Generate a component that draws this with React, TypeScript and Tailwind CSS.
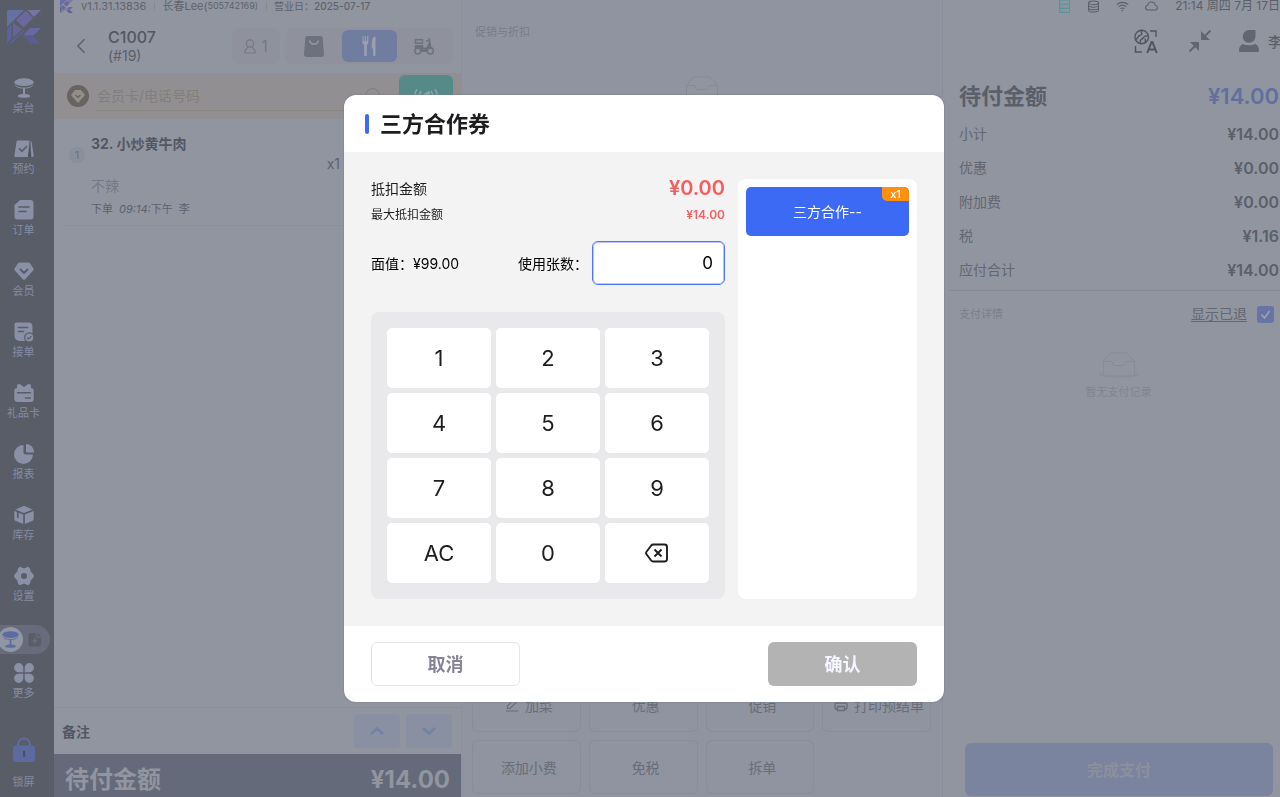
import React, { useState } from "react";

type IconProps = { className?: string };

const BrandMark = ({ className }: IconProps) => (
  <svg viewBox="0 0 34 34" className={className} aria-hidden="true">
    <path d="M0 1.500Q0 0 1.500 0H17L0 17z" fill="#6570a3" />
    <path d="M18.500.8l7.500 7.200-9.500 9.500L9 10z" fill="#6a689c" />
    <path d="M20.500 0H34l-7 7z" fill="#7476a0" />
    <path d="M0 19l4.500-4.500V28L0 33.500z" fill="#5a63a0" />
    <path d="M6 12.500l9 7-9 8z" fill="#646796" />
    <path d="M1.500 34L17 19.500v2L5 33z" fill="#5c6196" />
    <path d="M23 18h11l-7.500 7.500H16z" fill="#6769a3" />
    <path d="M16 26.500h10.500L33.500 34H24z" fill="#5b5c93" />
  </svg>
);

const TableIcon = ({ className }: IconProps) => (
  <svg viewBox="0 0 20 20" className={className} fill="currentColor" aria-hidden="true">
    <ellipse cx="10" cy="4.200" rx="9.700" ry="3.900" />
    <path d="M.6 6.200C3 9 6 9.600 10 9.600s7-.6 9.400-3.400C18.500 9.500 14.500 10.300 11 10.500V16c3 .1 5.200.8 5.200 1.900 0 1.200-2.800 1.900-6.200 1.900s-6.200-.7-6.200-1.900c0-1.100 2.200-1.800 5.200-1.900v-5.500C5.500 10.300 1.500 9.500.6 6.200z" />
  </svg>
);
const BookingIcon = ({ className }: IconProps) => (
  <svg viewBox="0 0 20 20" className={className} aria-hidden="true">
    <path d="M4 1.500h11.500L14 18H1.500C.6 18 .2 17.400.4 16.500L2.500 2.800C2.700 2 3.200 1.500 4 1.500z" fill="currentColor" />
    <path d="M5 9.300l3 3L13 7" fill="none" stroke="#595d68" strokeWidth="1.700" />
    <path d="M16.400 2c.8.1 1.200.6 1.300 1.300l2 13.200c.1.900-.4 1.500-1.300 1.500h-1z" fill="currentColor" />
    <path d="M15.600 7.500L17 18h-3z" fill="#4d515c" />
  </svg>
);
const OrderIcon = ({ className }: IconProps) => (
  <svg viewBox="0 0 20 20" className={className} aria-hidden="true">
    <path d="M6 0h10.500a3 3 0 0 1 3 3v13.500a3 3 0 0 1-3 3h-13a3 3 0 0 1-3-3V5z" fill="currentColor" />
    <path d="M5 7h10M5 11.500h7" stroke="#595d68" strokeWidth="1.600" strokeLinecap="round" />
  </svg>
);
const MemberIcon = ({ className }: IconProps) => (
  <svg viewBox="0 0 20 20" className={className} aria-hidden="true">
    <path d="M5.500 1.500h9c.6 0 1.100.3 1.500.8l3.400 5c.5.800.4 1.500-.2 2.200l-8 8.700c-.7.700-1.700.7-2.400 0l-8-8.700C.2 8.800.100 8.100.600 7.300l3.400-5c.400-.500.900-.800 1.500-.800z" fill="currentColor" />
    <path d="M6.500 8.500L10 12l3.500-3.500" fill="none" stroke="#595d68" strokeWidth="1.800" strokeLinecap="round" strokeLinejoin="round" />
  </svg>
);
const AcceptIcon = ({ className }: IconProps) => (
  <svg viewBox="0 0 20 20" className={className} aria-hidden="true">
    <path d="M2.500.5h12c2.500 0 4 1.500 4 4V19H5.500A5 5 0 0 1 .5 14V2.500a2 2 0 0 1 2-2z" fill="currentColor" />
    <path d="M4.500 5.500h9M4.500 9.500h5" stroke="#595d68" strokeWidth="1.600" strokeLinecap="round" />
    <circle cx="15.300" cy="15.500" r="4.600" fill="currentColor" stroke="#595d68" strokeWidth="1.300" />
    <path d="M13.200 15.500l1.500 1.500 2.700-2.800" fill="none" stroke="#595d68" strokeWidth="1.200" />
  </svg>
);
const GiftCardIcon = ({ className }: IconProps) => (
  <svg viewBox="0 0 20 20" className={className} aria-hidden="true">
    <path d="M3 6V3c0-2 2-2.600 3.500-1.600L10 4l3.500-2.600C15 .4 17 1 17 3v3z" fill="currentColor" />
    <rect x=".3" y="5" width="19.400" height="14" rx="3" fill="currentColor" />
    <path d="M3.500 9.800h13M11.500 15h4.800" stroke="#595d68" strokeWidth="1.500" strokeLinecap="round" />
  </svg>
);
const ReportIcon = ({ className }: IconProps) => (
  <svg viewBox="0 0 20 20" className={className} fill="currentColor" aria-hidden="true">
    <path d="M9.500 1A9.500 9.500 0 1 0 19 10.500h-7.500a2 2 0 0 1-2-2z" />
    <path d="M12.500 0A8 8 0 0 1 20 8.500h-6.500a1.500 1.500 0 0 1-1.500-1.500V.5z" />
  </svg>
);
const StockIcon = ({ className }: IconProps) => (
  <svg viewBox="0 0 20 20" className={className} fill="currentColor" aria-hidden="true">
    <path d="M10 .8l8.500 3.600L10 8 1.500 4.400z" />
    <path d="M.3 6l2.600 1v5.500l1.800.8V7.700l4.500 1.800V19l-7.300-3A2.500 2.500 0 0 1 .3 13.700zM19.700 6v7.700a2.500 2.500 0 0 1-1.600 2.300l-7.200 3V9.500z" />
  </svg>
);
const GearIcon = ({ className }: IconProps) => (
  <svg viewBox="0 0 20 20" className={className} fill="currentColor" aria-hidden="true">
    <path fillRule="evenodd" d="M5.500 1c.6-.3 1.200-.1 1.700.3 1.700 1.300 3.900 1.300 5.600 0 .5-.4 1.100-.6 1.700-.3 1.100.6 1.800 1.600 1.800 2.800.2 1.700 1 3 2.500 4 1.400 1 1.400 3.400 0 4.400-1.500 1-2.300 2.300-2.500 4 0 1.200-.7 2.200-1.800 2.800-.6.3-1.200.1-1.700-.3-1.700-1.300-3.900-1.300-5.600 0-.5.4-1.100.6-1.700.3-1.100-.6-1.800-1.600-1.800-2.800-.2-1.700-1-3-2.500-4-1.400-1-1.400-3.400 0-4.400 1.500-1 2.300-2.300 2.500-4C3.700 2.600 4.400 1.600 5.500 1zM10 7a3 3 0 1 0 0 6 3 3 0 0 0 0-6z" />
  </svg>
);
const MoreIcon = ({ className }: IconProps) => (
  <svg viewBox="0 0 20 20" className={className} fill="currentColor" aria-hidden="true">
    <path d="M9.300 9.300H4.700a4.600 4.600 0 1 1 4.600-4.600zM10.700 9.300h4.600a4.600 4.600 0 1 0-4.600-4.600zM9.300 10.700H4.700a4.600 4.600 0 1 0 4.600 4.600zM10.700 10.700h4.600a4.600 4.600 0 1 1-4.600 4.600z" />
  </svg>
);
const LockIcon = ({ className }: IconProps) => (
  <svg viewBox="0 0 22 25" className={className} aria-hidden="true">
    <path d="M5 10V7.500a6 6 0 0 1 12 0V10" fill="none" stroke="currentColor" strokeWidth="2.300" />
    <rect x="0" y="8.500" width="22" height="16.500" rx="3" fill="currentColor" />
    <rect x="10" y="13.500" width="2.200" height="6.500" rx="1.100" fill="#4b4f60" />
  </svg>
);

const navItems: { label: string; Icon: React.FC<IconProps> }[] = [
  { label: "桌台", Icon: TableIcon },
  { label: "预约", Icon: BookingIcon },
  { label: "订单", Icon: OrderIcon },
  { label: "会员", Icon: MemberIcon },
  { label: "接单", Icon: AcceptIcon },
  { label: "礼品卡", Icon: GiftCardIcon },
  { label: "报表", Icon: ReportIcon },
  { label: "库存", Icon: StockIcon },
  { label: "设置", Icon: GearIcon },
];

function Sidebar() {
  return (
    <nav className="flex w-[54px] shrink-0 flex-col bg-[#595d68] pr-[7px] text-[11px] text-[#858ca3]">
      <div className="flex justify-center pt-[10px] pb-[24px]">
        <BrandMark className="size-[34px]" />
      </div>
      {navItems.map(({ label, Icon }) => (
        <button key={label} type="button" className="flex h-[61px] shrink-0 flex-col items-center gap-[3px] pt-[10px]">
          <Icon className="size-[20px] text-[#8a90a6]" />
          <span className="leading-[14px] whitespace-nowrap">{label}</span>
        </button>
      ))}
      <div className="-mr-[3px] mt-2 flex h-[29px] shrink-0 items-center rounded-r-full bg-[#666c7b]">
        <button type="button" aria-label="桌台模式" className="-ml-[2px] flex size-[25px] items-center justify-center rounded-full bg-[#9196a5] text-[#5d6ba0]">
          <TableIcon className="size-[17px]" />
        </button>
        <button type="button" aria-label="快餐模式" className="ml-[5px] text-[#595d68]">
          <svg viewBox="0 0 14 15" className="h-[15px] w-[14px]" aria-hidden="true">
            <path d="M3 1h5v3.500A1.500 1.500 0 0 0 9.500 6H13v6a2.500 2.500 0 0 1-2.500 2.500H3A2.500 2.500 0 0 1 .5 12V3.500A2.500 2.500 0 0 1 3 1zM9.300.800L13 4.500H9.300z" fill="currentColor" />
            <path d="M6.800 6.500v5M4.300 9h5" stroke="#6f7585" strokeWidth="1.200" />
          </svg>
        </button>
      </div>
      <button type="button" className="mt-[9px] flex shrink-0 flex-col items-center gap-[3px]">
        <MoreIcon className="size-[20px] text-[#8a90a6]" />
        <span className="leading-[14px]">更多</span>
      </button>
      <button type="button" className="mt-auto flex shrink-0 flex-col items-center gap-[13px] pb-2">
        <LockIcon className="h-[25px] w-[22px] text-[#5d6a9f]" />
        <span className="leading-[14px]">锁屏</span>
      </button>
    </nav>
  );
}

function OrderPanel() {
  return (
    <section className="flex w-[407px] shrink-0 flex-col bg-[#9195a0]">
      <div className="flex h-[12px] shrink-0 items-center pl-[6px] text-[11px] leading-[12px] whitespace-nowrap text-[#5f636e]">
        <BrandMark className="size-[13px]" />
        <span className="ml-[8px]">v1.1.31.13836</span>
        <span className="mr-[7px] ml-[8px] h-[8px] w-px bg-[#858994]" />
        <span>长春Lee(</span>
        <span className="text-[9px]">505742169)</span>
        <span className="mr-[7px] ml-[8px] h-[8px] w-px bg-[#858994]" />
        <span className="text-[10px]">营业日：</span>
        <span className="text-[10px] font-medium">2025-07-17</span>
      </div>

      <header className="flex h-[61px] shrink-0 items-center pt-[7px] pr-[8px] pl-[21px] text-[#5b5f6a]">
        <button type="button" aria-label="返回">
          <svg viewBox="0 0 12 18" className="h-[16px] w-[12px]" fill="none" stroke="currentColor" strokeWidth="1.600" aria-hidden="true">
            <path d="M10 1.500L2.500 9l7.500 7.500" />
          </svg>
        </button>
        <div className="ml-[21px] flex-1">
          <h1 className="text-[16px] leading-[20px] font-medium text-[#535762]">C1007</h1>
          <p className="text-[14px] leading-[18px]">(#19)</p>
        </div>
        <button type="button" className="flex h-[36px] w-[48px] items-center justify-center gap-[5px] rounded-lg bg-[#8f929d] text-[16px] text-[#747884]">
          <svg viewBox="0 0 12 15" className="h-[15px] w-[12px]" fill="none" stroke="currentColor" strokeWidth="1.200" aria-hidden="true">
            <circle cx="6" cy="4.500" r="3.700" />
            <path d="M3.800 8L.8 12.200c-.5.900 0 1.800 1 1.800h8.400c1 0 1.500-.9 1-1.800L8.200 8" />
          </svg>
          1
        </button>
        <div className="ml-[5px] flex h-[36px] w-[168px] items-center justify-between rounded-lg bg-[#8f929d] px-[2px] text-[#6d717e]">
          <button type="button" aria-label="外带" className="flex h-[32px] w-[54px] items-center justify-center">
            <svg viewBox="0 0 20 21" className="h-[21px] w-[20px]" aria-hidden="true">
              <path d="M4 0h12c1.600 0 2.500.8 2.700 2.300L20 18c.1 2-.9 3-2.500 3h-15C.9 21-.1 20 0 18L1.300 2.300C1.500.8 2.400 0 4 0z" fill="currentColor" />
              <path d="M5.500 4.500c1 4.700 8 4.700 9 0" fill="none" stroke="#9195a0" strokeWidth="1.600" />
            </svg>
          </button>
          <button type="button" aria-label="堂食" className="flex h-[32px] w-[55px] items-center justify-center rounded-md bg-[#707d9f] text-[#9ba0b1]">
            <svg viewBox="0 0 15 20" className="h-[20px] w-[15px]" fill="currentColor" aria-hidden="true">
              <path d="M.5 0h1v5h1.200V0h1.200v5h1.200V0h1.200v6.500c0 1.200-.6 1.900-1.500 2.300V19a1.300 1.300 0 0 1-2.600 0V8.800C1.100 8.400.500 7.700.500 6.500zM13.500.3V19a1.200 1.200 0 0 1-2.400 0v-6.500H9.800V7c0-3.500 1.500-6 3.700-6.700z" />
            </svg>
          </button>
          <button type="button" aria-label="外卖" className="flex h-[32px] w-[54px] items-center justify-center">
            <svg viewBox="0 0 20 17" className="h-[17px] w-[20px]" fill="none" stroke="currentColor" strokeWidth="1.500" aria-hidden="true">
              <circle cx="3.800" cy="13" r="3" /><circle cx="16.300" cy="13" r="3" />
              <path d="M1.500 1.800h7v3.400h-7zM12 3h3.500M15 0l1.500 8" />
              <path d="M.8 7h8.500v2.500h3.200L14.500 5H17v3.500l2.300 1.800-3 .2c-1.800.3-2.800 1.500-3.300 3.500H7.500C7 11 5 9.500.8 10z" fill="currentColor" stroke="none" />
            </svg>
          </button>
        </div>
      </header>

      <div className="flex h-[46px] shrink-0 items-center bg-[#918f92] pr-[8px] pl-[13px]">
        <span className="flex size-[22px] items-center justify-center rounded-full bg-[#686462]">
          <svg viewBox="0 0 14 13" className="h-[13px] w-[14px]" aria-hidden="true">
            <path d="M4 0h6l4 5-7 8-7-8z" fill="#938e8a" />
            <path d="M4.500 5L7 7.500 9.500 5" fill="none" stroke="#686462" strokeWidth="1.300" />
          </svg>
        </span>
        <div className="ml-[8px] flex h-[30px] flex-1 items-center border-b border-[#8a8581]">
          <input aria-label="会员卡/电话号码" placeholder="会员卡/电话号码" className="min-w-0 flex-1 bg-transparent text-[14px] outline-none placeholder:text-[#817e7c]" />
          <svg viewBox="0 0 16 16" className="mr-[18px] size-[16px]" fill="none" stroke="#807b78" aria-hidden="true">
            <circle cx="7.500" cy="7" r="6.500" /><path d="M12 12l4 4" />
          </svg>
        </div>
        <button type="button" aria-label="读卡" className="flex h-[42px] w-[54px] justify-center rounded-md bg-[#558a88] pt-[14px]">
          <svg viewBox="0 0 26 20" className="h-[20px] w-[26px]" fill="none" stroke="#8ba3a7" strokeWidth="1.500" aria-hidden="true">
            <path d="M4 0C.5 5 .5 12 4 17M8 2C5.500 6 5.500 11 8 15M22 0c3.500 5 3.500 12 0 17M18 2c2.500 4 2.500 9 0 13" />
            <path d="M12 5l4-2 1 9-4 1z" fill="#8ba3a7" />
          </svg>
        </button>
      </div>

      <div className="flex min-h-0 flex-1 flex-col">
        <article className="mx-[8px] flex h-[107px] gap-[6px] border-b border-[#8c909b] pl-[7px] text-[#5d6270]">
          <span className="mt-[28px] flex size-[16px] items-center justify-center rounded-full bg-[#8b8f9b] text-[11px] text-[#6d717e]">1</span>
          <div className="flex-1">
            <h2 className="mt-[15px] text-[14px] leading-[20px] font-bold text-[#535764]">32. 小炒黄牛肉</h2>
            <p className="pr-[113px] text-right text-[14px] leading-[20px]">x1</p>
            <p className="text-[14px] leading-[24px] text-[#757986]">不辣</p>
            <p className="flex gap-[6px] text-[11px] leading-[22px]">
              <span>下单</span>
              <span><i>09:14:</i>下午</span>
              <span>李</span>
            </p>
          </div>
        </article>
      </div>

      <div className="flex h-[47px] shrink-0 items-center gap-[6px] border-t border-[#8b8f9a] pr-[9px] pl-[8px]">
        <span className="flex-1 text-[14px] font-bold text-[#535762]">备注</span>
        <button type="button" aria-label="上移" className="flex h-[34px] w-[46px] items-center justify-center rounded-sm bg-[#8990a2] text-[#7481a6]">
          <svg viewBox="0 0 14 8" className="h-[8px] w-[14px]" fill="none" stroke="currentColor" strokeWidth="2.600" aria-hidden="true"><path d="M1 7l6-5.500L13 7" /></svg>
        </button>
        <button type="button" aria-label="下移" className="flex h-[34px] w-[46px] items-center justify-center rounded-sm bg-[#8990a2] text-[#7481a6]">
          <svg viewBox="0 0 14 8" className="h-[8px] w-[14px]" fill="none" stroke="currentColor" strokeWidth="2.600" aria-hidden="true"><path d="M1 1l6 5.500L13 1" /></svg>
        </button>
      </div>
      <div className="flex h-[43px] shrink-0 items-center justify-between bg-[#646a79] pt-[8px] pr-[11px] pl-[11px] text-[24px] leading-[34px] font-bold text-[#9195a0]">
        <span>待付金额</span>
        <span>¥14.00</span>
      </div>
    </section>
  );
}

const EmptyBox = () => (
  <svg viewBox="0 0 42 26" className="h-[26px] w-[42px]" fill="none" stroke="#878b97" aria-hidden="true">
    <ellipse cx="21" cy="22.500" rx="20.500" ry="3.300" fill="#8c909b" stroke="none" />
    <path d="M5.500 9.500L13 1h16l7.500 8.500V22a2 2 0 0 1-2 2h-27a2 2 0 0 1-2-2z" fill="#9195a0" />
    <path d="M5.500 9.500H13c1.200 0 1.700 1 1.700 2 0 1.200.8 2 2 2h8.600c1.200 0 2-.8 2-2 0-1 .5-2 1.700-2h7.500" />
  </svg>
);

const actions: { label: string; icon?: React.ReactNode }[] = [
  {
    label: "加菜",
    icon: (
      <svg viewBox="0 0 14 14" className="size-[14px]" fill="none" stroke="currentColor" strokeWidth="1.200" aria-hidden="true">
        <path d="M1 13h12M2.500 10.500V8L9.500 1 12 3.500l-7 7z" />
      </svg>
    ),
  },
  { label: "优惠" },
  { label: "促销" },
  {
    label: "打印预结单",
    icon: (
      <svg viewBox="0 0 14 14" className="size-[14px]" fill="none" stroke="currentColor" strokeWidth="1.300" aria-hidden="true">
        <path d="M3.500 5V1.500h7V5M3.500 11H2a1 1 0 0 1-1-1V6a1 1 0 0 1 1-1h10a1 1 0 0 1 1 1v4a1 1 0 0 1-1 1h-1.500M3.500 8.500h7v4h-7z" />
      </svg>
    ),
  },
  { label: "添加小费" },
  { label: "免税" },
  { label: "拆单" },
];

function PromotionPanel() {
  return (
    <section className="flex min-w-0 flex-1 flex-col border-l border-[#8c909b] bg-[#8f94a0] pt-[24px] pr-[11px] pb-[3px] pl-[10px]">
      <h2 className="pl-[3px] text-[11px] leading-[16px] text-[#787c88]">促销与折扣</h2>
      <div className="flex justify-center pt-[36px]"><EmptyBox /></div>
      <div className="mt-auto grid grid-cols-4 gap-[8px]">
        {actions.map(({ label, icon }) => (
          <button key={label} type="button" className="flex h-[54px] items-center justify-center gap-[6px] rounded-md border border-[#898d99] pl-[5px] text-[14px] whitespace-nowrap text-[#696d79]">
            {icon}
            {label}
          </button>
        ))}
      </div>
    </section>
  );
}

const totals = [
  ["小计", "¥14.00"],
  ["优惠", "¥0.00"],
  ["附加费", "¥0.00"],
  ["税", "¥1.16"],
  ["应付合计", "¥14.00"],
];

function PaymentPanel() {
  return (
    <section className="flex w-[338px] shrink-0 flex-col overflow-hidden border-l border-[#8a8e99] bg-[#9195a0] text-[#5b5f6a]">
      <div className="flex h-[12px] shrink-0 items-center pl-[116px] text-[12px] leading-[12px] whitespace-nowrap">
        <svg viewBox="0 0 12 14" className="h-[13px] w-[12px]" fill="none" stroke="#5a9396" strokeWidth="1.200" aria-hidden="true">
          <path d="M.6 0h10.800v13.300H.6zM.6 4.500h10.800M.6 9h10.800M3 2.200h1M3 6.800h1M3 11.200h1" />
        </svg>
        <svg viewBox="0 0 12 13" className="ml-[18px] h-[13px] w-[12px]" fill="none" stroke="currentColor" strokeWidth="1.100" aria-hidden="true">
          <ellipse cx="6" cy="2.500" rx="5.400" ry="2" />
          <path d="M.6 2.500v8c0 1.100 2.400 2 5.400 2s5.400-.9 5.400-2v-8M.6 5.200c0 1.100 2.400 2 5.400 2s5.400-.9 5.400-2M.6 8c0 1.100 2.400 2 5.400 2s5.400-.9 5.400-2" />
        </svg>
        <svg viewBox="0 0 14 11" className="ml-[17px] h-[11px] w-[14px]" fill="none" stroke="currentColor" strokeWidth="1.200" aria-hidden="true">
          <path d="M.8 3.500c3.500-3.200 8.900-3.200 12.400 0M2.900 5.700c2.400-2 5.800-2 8.200 0M4.900 7.900c1.300-1 2.900-1 4.200 0" />
          <circle cx="7" cy="9.800" r=".9" fill="currentColor" stroke="none" />
        </svg>
        <svg viewBox="0 0 14 10" className="ml-[16px] h-[10px] w-[14px]" fill="none" stroke="currentColor" strokeWidth="1.100" aria-hidden="true">
          <path d="M3.300 9.300C1.700 9.300.6 8.300.6 6.800c0-1.400 1-2.400 2.400-2.600C3.300 2 4.900.7 7 .7S10.700 2 11 4.200c1.400.2 2.400 1.200 2.400 2.600 0 1.500-1.100 2.500-2.700 2.500z" />
        </svg>
        <span className="ml-[17px]">21:14 周四 7月 17日</span>
      </div>

      <div className="flex h-[58px] shrink-0 items-center pl-[191px] whitespace-nowrap">
        <button type="button" aria-label="语言">
          <svg viewBox="0 0 24 25" className="h-[25px] w-[24px]" fill="none" stroke="#51555f" strokeWidth="1.400" aria-hidden="true">
            <circle cx="7.700" cy="8" r="6.800" />
            <path d="M1.500 10.500C4 10 3.500 7 5.500 6.500S8.500 5 7.500 3.500 8 1.500 8.500 1.500M14 7c-2.500-.5-4 .5-5 2s-1.500 1-2.500 2 .5 2.500 0 3.500M11 9.500c.5 1.500 0 2.500.5 4M16 2h6v6M1.500 17v6H8" />
            <path d="M13.200 24l4.400-11h.8l4.400 11M14.800 20.500h6.500" strokeWidth="2" />
          </svg>
        </button>
        <button type="button" aria-label="收起" className="ml-[31px]">
          <svg viewBox="0 0 22 22" className="size-[22px]" fill="#626671" stroke="#626671" aria-hidden="true">
            <path d="M12 1v9h9zM10 21v-9H1z" stroke="none" />
            <path d="M16 6l5.500-5.500M6 16L.5 21.500" strokeWidth="2" />
          </svg>
        </button>
        <button type="button" className="ml-[28px] flex items-center gap-[9px] text-[14px] font-medium">
          <svg viewBox="0 0 20 22" className="h-[22px] w-[20px]" fill="#626671" aria-hidden="true">
            <path d="M10 0h6.500v6.500A6.400 6.400 0 1 1 10 0zM3.500 14c4 1.600 9 1.600 13 0 2.500 1.500 3.500 3.500 3.500 6.500 0 1-.5 1.500-1.500 1.500h-17C.5 22 0 21.500 0 20.500c0-3 1-5 3.500-6.500z" />
          </svg>
          李
        </button>
      </div>

      <div className="flex items-center justify-between pt-[10px] pr-px pl-[16px] text-[22px] leading-[32px] font-bold">
        <span>待付金额</span>
        <span className="font-semibold text-[#616f9f]">¥14.00</span>
      </div>
      <dl className="mt-[5px] pr-px pl-[16px] text-[14px] leading-[34px]">
        {totals.map(([name, value]) => (
          <div key={name} className="flex justify-between">
            <dt className="text-[#636772]">{name}</dt>
            <dd className="text-[16px] font-semibold">{value}</dd>
          </div>
        ))}
      </dl>
      <div className="ml-[6px] mt-[3px] border-t border-[#868a95]" />
      <div className="flex items-center pt-[11px] pr-[6px] pl-[16px]">
        <span className="flex-1 text-[11px] text-[#7a7e89]">支付详情</span>
        <label htmlFor="show-refunded" className="text-[14px] leading-[24px] text-[#636772] underline underline-offset-2">显示已退</label>
        <span className="relative ml-[10px] flex size-[17px]">
          <input id="show-refunded" type="checkbox" defaultChecked className="peer size-[17px] appearance-none rounded-[3px] bg-[#7a83a5] checked:bg-[#6875a4]" />
          <svg viewBox="0 0 17 17" className="pointer-events-none absolute inset-0 hidden peer-checked:block" fill="none" stroke="#9da2b2" strokeWidth="1.600" aria-hidden="true">
            <path d="M4.500 8.500l3 3.500L12.500 5" />
          </svg>
        </span>
      </div>
      <div className="flex flex-col items-center gap-[6px] pt-[26px] pl-[14px] text-[11px] leading-[16px] text-[#80848f]">
        <EmptyBox />
        暂无支付记录
      </div>
      <button type="button" className="mt-auto mr-[7px] mb-px ml-[22px] h-[53px] shrink-0 rounded-md bg-[#7b849e] text-[16px] font-bold text-[#8b909d]">完成支付</button>
    </section>
  );
}

const keys = ["1", "2", "3", "4", "5", "6", "7", "8", "9", "AC", "0", "back"];

function VoucherDialog() {
  const [count, setCount] = useState("0");
  const press = (key: string) => {
    if (key === "AC") setCount("0");
    else if (key === "back") setCount((c) => c.slice(0, -1) || "0");
    else setCount((c) => (c === "0" ? key : c + key));
  };
  return (
    <div className="fixed inset-0 flex items-center justify-center pl-2">
      <div role="dialog" aria-modal="true" aria-labelledby="voucher-title" className="flex w-[600px] flex-col overflow-hidden rounded-xl bg-white text-[#1d1d1f] shadow-[0_0_1px_1px_rgba(120,125,137,0.4)]">
        <header className="flex h-[57px] items-center gap-[11px] pl-[21px]">
          <span className="h-[20px] w-[4px] rounded-full bg-[#3c6af7]" />
          <h2 id="voucher-title" className="text-[22px] leading-[32px] font-bold">三方合作券</h2>
        </header>

        <div className="flex gap-[13px] bg-[#f3f3f3] p-[27px]">
          <div className="flex-1 text-[14px]">
            <div className="flex h-[18px] items-center justify-between">
              <span>抵扣金额</span>
              <span className="text-[20px] font-semibold text-[#f35e5e]">¥0.00</span>
            </div>
            <div className="mt-[9px] flex h-[18px] items-center justify-between text-[12px]">
              <span>最大抵扣金额</span>
              <span className="font-semibold text-[#f35e5e]">¥14.00</span>
            </div>
            <div className="mt-[17px] flex h-[44px] items-center text-black">
              <span className="flex-1">面值：¥99.00</span>
              <label htmlFor="voucher-count" className="pr-[4px]">使用张数：</label>
              <input id="voucher-count" inputMode="numeric" value={count} onChange={(e) => setCount(e.target.value)} className="h-[44px] w-[133px] rounded-md border border-[#4a75f6] bg-white pr-[11px] text-right text-[17px] text-black shadow-[inset_0_0_0_1px_rgba(74,117,246,0.4)] outline-none" />
            </div>
            <div className="mt-[27px] grid grid-cols-3 gap-[5px] rounded-lg bg-[#e9e9eb] p-4">
              {keys.map((key) => (
                <button key={key} type="button" onClick={() => press(key)} aria-label={key === "back" ? "退格" : undefined} className="flex h-[60px] items-center justify-center rounded-[5px] bg-white text-[22px]">
                  {key === "back" ? (
                    <svg viewBox="0 0 24 20" className="h-[20px] w-[24px]" fill="none" stroke="currentColor" strokeWidth="1.900" strokeLinejoin="round" aria-hidden="true">
                      <path d="M8.200 1.500h11.300a2.500 2.500 0 0 1 2.500 2.500v12a2.500 2.500 0 0 1-2.500 2.500H8.200a2.500 2.500 0 0 1-2-1L1.500 11.200a2 2 0 0 1 0-2.400l4.700-6.300a2.500 2.500 0 0 1 2-1z" />
                      <path d="M9.500 6.500l7 7M16.500 6.500l-7 7" />
                    </svg>
                  ) : key}
                </button>
              ))}
            </div>
          </div>
          <div className="w-[179px] rounded-lg bg-white p-2">
            <button type="button" className="relative flex h-[49px] w-full items-center justify-center rounded-[5px] bg-[#3d6af5] text-[14px] text-white">
              三方合作--
              <span className="absolute top-0 right-0 flex h-[14px] w-[27px] items-center justify-center rounded-tr-[5px] rounded-bl-[5px] bg-[#ff8f0c] text-[11px] font-medium">x1</span>
            </button>
          </div>
        </div>

        <footer className="flex justify-between px-[27px] py-4 text-[18px] font-bold">
          <button type="button" className="h-[44px] w-[149px] rounded-md border border-[#e4e4e8] bg-white text-[#868396]">取消</button>
          <button type="button" className="h-[44px] w-[149px] rounded-md bg-[#b3b3b3] text-[#f5f6ff]">确认</button>
        </footer>
      </div>
    </div>
  );
}

export default function App() {
  return (
    <div className="flex h-screen overflow-hidden bg-[#9195a0] font-['Inter','Noto_Sans_CJK_SC',sans-serif]">
      <Sidebar />
      <OrderPanel />
      <PromotionPanel />
      <PaymentPanel />
      <VoucherDialog />
    </div>
  );
}
